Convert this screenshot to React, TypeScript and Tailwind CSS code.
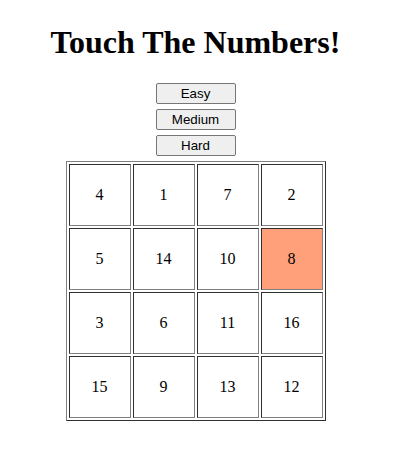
import React from 'react';

const grid = [
  [4, 1, 7, 2],
  [5, 14, 10, 8],
  [3, 6, 11, 16],
  [15, 9, 13, 12],
];

export default function App() {
  return (
    <div className="min-h-screen bg-white">
      <div className="w-[391px] flex flex-col items-center">
        {/* Title */}
        <h1 className="mt-[24px] text-[32px] leading-[37px] font-bold text-black font-['Liberation_Serif',serif]">
          Touch The Numbers!
        </h1>

        {/* Difficulty buttons */}
        <div className="mt-[22px] flex flex-col gap-[5px]">
          {['Easy', 'Medium', 'Hard'].map((label) => (
            <button
              key={label}
              className="w-[80px] h-[21px] bg-[#efefef] border border-[#767676] rounded-[2px] text-[13.33px] leading-none text-black font-['Liberation_Sans',Arial,sans-serif]"
            >
              {label}
            </button>
          ))}
        </div>

        {/* Board */}
        <div className="mt-[5px] p-[2px] border border-t-[#808080] border-l-[#808080] border-b-[#2e2e2e] border-r-[#2e2e2e] grid grid-cols-4 gap-[2px]">
          {grid.flat().map((n) => (
            <div
              key={n}
              className={`w-[62px] h-[62px] flex items-center justify-center border border-t-[#2e2e2e] border-l-[#2e2e2e] border-b-[#808080] border-r-[#808080] text-[16px] text-black font-['Liberation_Serif',serif] ${
                n === 8 ? 'bg-[#ffa07a]' : 'bg-white'
              }`}
            >
              {n}
            </div>
          ))}
        </div>
      </div>
    </div>
  );
}
